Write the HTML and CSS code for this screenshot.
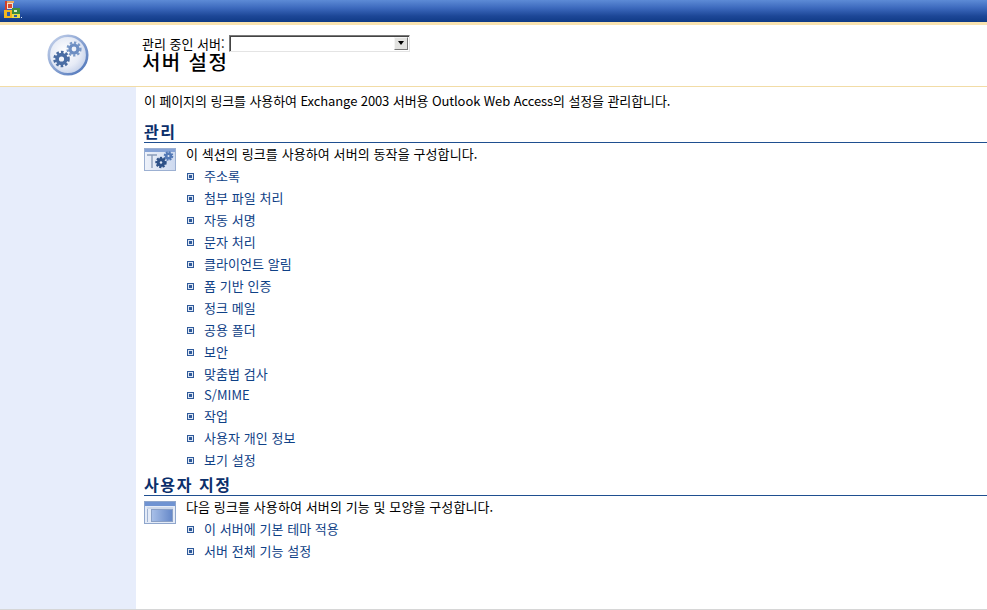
FILE: index.html
```html
<!DOCTYPE html>
<html lang="ko">
<head>
<meta charset="utf-8">
<title>서버 설정</title>
<link rel="stylesheet" href="styles.css">
</head>
<body>
<div class="topbar">
  <svg class="applogo" width="22" height="22" viewBox="0 0 22 22">
    <rect x="5" y="1" width="9" height="2" fill="#e8a860"/>
    <rect x="5" y="1" width="2" height="10" fill="#d0402a"/>
    <rect x="7" y="3" width="6" height="6" fill="#f0e0d0"/>
    <rect x="8" y="4" width="4" height="4" fill="#d84a30"/>
    <rect x="4" y="10" width="8" height="8" fill="#f2b71e"/>
    <rect x="12" y="8" width="8" height="6" fill="#3f8d3a"/>
    <rect x="12" y="14" width="8" height="4" fill="#e6dc4a"/>
    <rect x="14" y="10" width="3" height="2" fill="#d8f0c8"/>
    <rect x="7" y="12" width="3" height="4" fill="#2a5fb0"/>
    <rect x="14" y="15" width="3" height="2" fill="#2a5fb0"/>
    <rect x="21" y="17" width="1" height="1" fill="#dce8f8"/>
  </svg>
</div>
<header class="header">
  <div class="header-icon">
    <svg width="42" height="42" viewBox="0 0 42 42">
      <defs>
        <radialGradient id="disc" cx="0.42" cy="0.42" r="0.6">
          <stop offset="0" stop-color="#ffffff"/>
          <stop offset="0.65" stop-color="#e6ebf6"/>
          <stop offset="1" stop-color="#c6d2ea"/>
        </radialGradient>
        <linearGradient id="ring" x1="0" y1="0" x2="1" y2="1">
          <stop offset="0" stop-color="#c8d4ec"/>
          <stop offset="1" stop-color="#4a72b8"/>
        </linearGradient>
      </defs>
      <circle cx="21" cy="21" r="19.2" fill="url(#disc)" stroke="url(#ring)" stroke-width="2.6"/>
      <circle cx="27" cy="15" r="6.4" fill="none" stroke="#7b9ac8" stroke-width="2.4" stroke-dasharray="2.3 1.9"/>
      <circle cx="27" cy="15" r="4" fill="none" stroke="#6d8ec2" stroke-width="3.2"/>
      <circle cx="14.5" cy="25" r="7" fill="none" stroke="#4a6b9f" stroke-width="2.6" stroke-dasharray="2.6 2"/>
      <circle cx="14.5" cy="25" r="4.4" fill="none" stroke="#4a6da4" stroke-width="3.6"/>
    </svg>
  </div>
  <div class="header-text">
    <div class="server-row">
      <label class="server-label">관리 중인 서버:</label>
      <div class="select"><span class="select-btn"><i class="arrow"></i></span></div>
    </div>
    <h1 class="title">서버 설정</h1>
  </div>
</header>
<div class="body-wrap">
  <aside class="side"></aside>
  <main class="content">
    <p class="intro">이 페이지의 링크를 사용하여 Exchange 2003 서버용 Outlook Web Access의 설정을 관리합니다.</p>
    <h2 class="section-title first">관리</h2>
    <div class="section">
      <svg class="sec-icon" width="32" height="23" viewBox="0 0 32 23">
        <defs>
          <linearGradient id="pale" x1="0" y1="0" x2="1" y2="0">
            <stop offset="0" stop-color="#eef2fa"/>
            <stop offset="1" stop-color="#cdd9ef"/>
          </linearGradient>
        </defs>
        <rect x="0.5" y="0.5" width="31" height="22" fill="url(#pale)" stroke="#9cb0d2"/>
        <rect x="1" y="1" width="30" height="3" fill="#86a3d6"/>
        <path d="M3 7h10M8 7v13" stroke="#8b9dba" stroke-width="1.4" fill="none"/>
        <circle cx="24.5" cy="8" r="3.6" fill="#5379b6" stroke="#5379b6" stroke-width="2.4" stroke-dasharray="1.7 1.1"/>
        <circle cx="24.5" cy="8" r="1" fill="#dfe7f5"/>
        <circle cx="17" cy="14.5" r="4.4" fill="#2f5288" stroke="#2f5288" stroke-width="2.6" stroke-dasharray="2 1.2"/>
        <circle cx="17" cy="14.5" r="1.2" fill="#dfe7f5"/>
      </svg>
      <div class="sec-body">
        <p class="sec-desc">이 섹션의 링크를 사용하여 서버의 동작을 구성합니다.</p>
        <ul class="links">
          <li><a href="#">주소록</a></li>
          <li><a href="#">첨부 파일 처리</a></li>
          <li><a href="#">자동 서명</a></li>
          <li><a href="#">문자 처리</a></li>
          <li><a href="#">클라이언트 알림</a></li>
          <li><a href="#">폼 기반 인증</a></li>
          <li><a href="#">정크 메일</a></li>
          <li><a href="#">공용 폴더</a></li>
          <li><a href="#">보안</a></li>
          <li><a href="#">맞춤법 검사</a></li>
          <li class="short"><a href="#">S/MIME</a></li>
          <li><a href="#">작업</a></li>
          <li><a href="#">사용자 개인 정보</a></li>
          <li><a href="#">보기 설정</a></li>
        </ul>
      </div>
    </div>
    <h2 class="section-title second">사용자 지정</h2>
    <div class="section">
      <svg class="sec-icon" width="32" height="23" viewBox="0 0 32 23">
        <defs>
          <linearGradient id="pane" x1="0" y1="0" x2="1" y2="0">
            <stop offset="0" stop-color="#a9c0e8"/>
            <stop offset="1" stop-color="#6487c8"/>
          </linearGradient>
        </defs>
        <rect x="0.5" y="0.5" width="31" height="22" fill="#e4ebf7" stroke="#8fa6cc"/>
        <rect x="1" y="1" width="30" height="4" fill="#6f93d2"/>
        <rect x="7.5" y="8.5" width="21" height="12" fill="url(#pane)" stroke="#8aa0c6"/>
        <path d="M3.5 8v13" stroke="#9fb2d2"/>
        <path d="M3 7h26" stroke="#b8c6de"/>
      </svg>
      <div class="sec-body">
        <p class="sec-desc">다음 링크를 사용하여 서버의 기능 및 모양을 구성합니다.</p>
        <ul class="links">
          <li><a href="#">이 서버에 기본 테마 적용</a></li>
          <li><a href="#">서버 전체 기능 설정</a></li>
        </ul>
      </div>
    </div>
  </main>
</div>
</body>
</html>
```

FILE: styles.css
```css
* { box-sizing: border-box; }
html, body { margin: 0; padding: 0; height: 100%; overflow: hidden; }
body {
  display: flex;
  flex-direction: column;
  height: 610px;
  background: #fff;
  color: #000;
  font-family: "Noto Sans CJK KR", "DejaVu Sans", sans-serif;
  font-size: 13px;
  font-weight: 400;
}
.topbar {
  height: 25px;
  flex: none;
  background: linear-gradient(#5d8bd6 0, #3c69bd 8px, #1d4797 16px, #0f3a86 22px);
  border-bottom: 3px solid #f9e3b0;
}
.applogo { display: block; }
.header {
  height: 62px;
  flex: none;
  display: flex;
  background: #fff;
  border-bottom: 1px solid #f2dca6;
}
.header-icon {
  width: 136px;
  flex: none;
  padding: 9px 0 0 47px;
}
.header-text { padding: 9px 0 0 6px; }
.server-row { display: flex; align-items: center; height: 20px; }
.server-label { line-height: 20px; font-size: 13px; margin-right: 4px; }
.select {
  width: 181px;
  height: 17px;
  margin-top: -2px;
  background: #fff;
  border: 1px solid;
  border-color: #7a7a7a #e4e4e4 #e4e4e4 #7a7a7a;
  box-shadow: inset 1px 1px 0 #444;
  display: flex;
  justify-content: flex-end;
  padding: 1px;
}
.select-btn {
  width: 14px;
  height: 13px;
  background: #e2e2e0;
  border: 1px solid;
  border-color: #f4f4f4 #777 #777 #f4f4f4;
  display: flex;
  align-items: center;
  justify-content: center;
}
.arrow {
  width: 0;
  height: 0;
  border-left: 3.5px solid transparent;
  border-right: 3.5px solid transparent;
  border-top: 4px solid #000;
}
.title {
  margin: -3px 0 0;
  font-size: 20px;
  font-weight: 500;
  line-height: 22px;
  letter-spacing: 1.4px;
}
.body-wrap { flex: 1; display: flex; min-height: 0; border-bottom: 1px solid #d6d6d6; }
.side { width: 136px; flex: none; background: #e7edfb; }
.content { flex: 1; padding: 5px 0 0 8px; }
.intro { margin: 0; line-height: 18px; letter-spacing: -0.1px; }
.section-title {
  margin: 0;
  font-size: 16px;
  font-weight: 700;
  line-height: 22px;
  letter-spacing: 1.6px;
  color: #0b2f6b;
  height: 26px;
  padding-top: 3px;
  border-bottom: 1px solid #1f4f90;
}
.section-title.first { margin-top: 7px; }
.section-title.second { margin-top: -1px; }
.section { display: flex; }
.sec-icon { flex: none; margin-top: 5px; }
.sec-body { margin-left: 10px; }
.sec-desc { margin: 0; line-height: 22px; height: 22px; letter-spacing: 0.1px; }
.links { margin: 0; padding: 0; list-style: none; }
.links li {
  height: 22px;
  line-height: 22px;
  display: flex;
  align-items: center;
}
.links li.short { height: 20px; }
.links li::before {
  content: "";
  width: 5px;
  height: 5px;
  margin: 0 10px 0 1px;
  border: 1px solid #2f5a9a;
  background: #2f5a9a;
  box-shadow: inset 0 0 0 1px #dfe7f4;
}
.links a { color: #0f4186; text-decoration: none; letter-spacing: 0.05px; }
```
